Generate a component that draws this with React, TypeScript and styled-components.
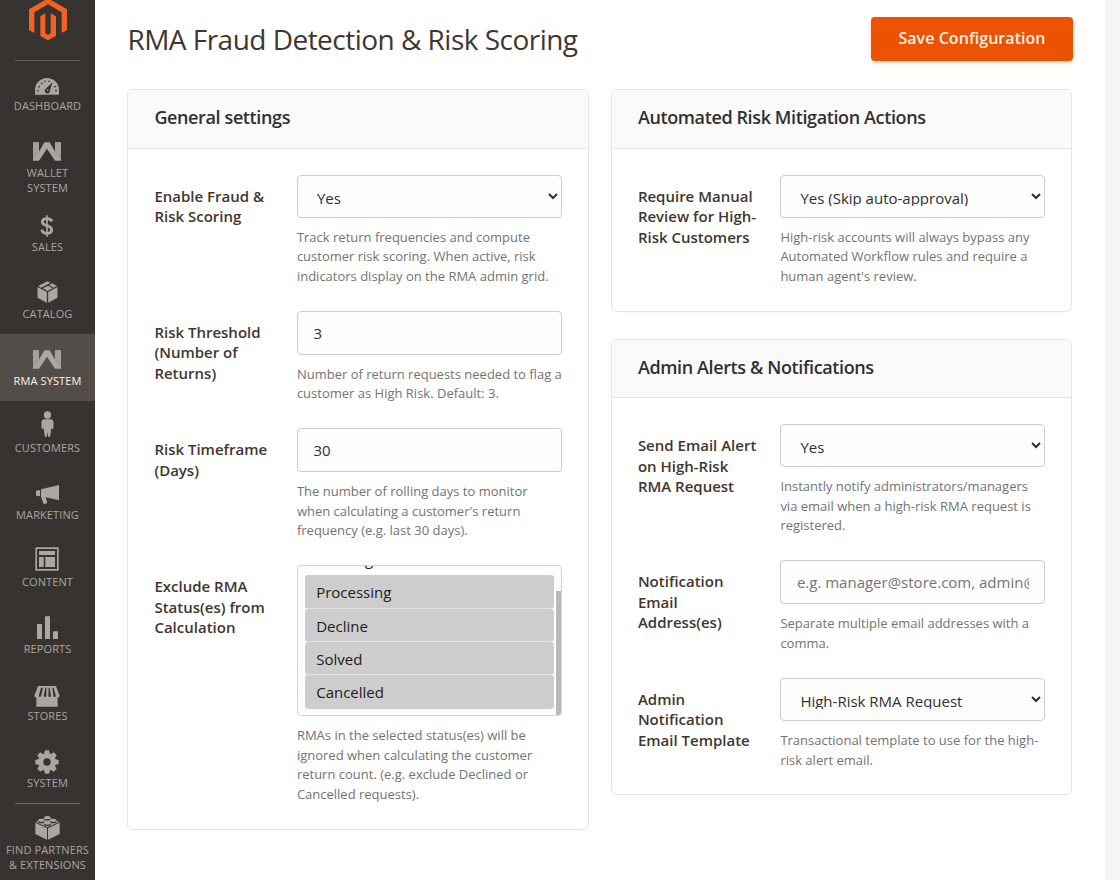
import React from "react";
import styled, { createGlobalStyle } from "styled-components";

const BG = "#373330";

const Global = createGlobalStyle`
  * { box-sizing: border-box; }
  body { margin: 0; background: #f5f5f5; font-family: "Open Sans", sans-serif; color: #41362f; overflow: hidden; }
`;

const Page = styled.div`
  display: flex;
  width: 1120px;
  height: 880px;
  overflow: hidden;
`;

const Sidebar = styled.nav`
  width: 95px;
  flex: none;
  background: ${BG};
  display: flex;
  flex-direction: column;
  align-items: center;
`;

const LogoBox = styled.div`
  height: 61px;
  width: 65px;
  margin-bottom: -2px;
  flex: none;
  display: flex;
  justify-content: center;
  border-bottom: 1px solid #625a55;
`;

const Divider = styled.div`
  width: 65px;
  height: 1px;
  margin-bottom: -1px;
  flex: none;
  background: #736963;
`;

const Menu = styled.div`
  width: 100%;
  flex: none;
`;

const MenuItem = styled.a<{ $active?: boolean }>`
  display: flex;
  flex-direction: column;
  align-items: center;
  min-height: 67px;
  padding-bottom: 5px;
  color: ${(p) => (p.$active ? "#f7f3eb" : "#aaa6a0")};
  background: ${(p) => (p.$active ? "#524d49" : "transparent")};
`;

const IconSlot = styled.span<{ $drop: number }>`
  height: 40px;
  padding-right: 1px;
  padding-bottom: ${(p) => p.$drop}px;
  flex: none;
  display: flex;
  align-items: flex-end;
  color: #aaa6a0;
  svg { display: block; }
`;

const MenuLabel = styled.span`
  font-size: 11px;
  line-height: 14.5px;
  letter-spacing: 0.1px;
  text-align: center;
  text-transform: uppercase;
  white-space: pre-line;
`;

const Main = styled.main`
  width: 1010px;
  flex: none;
  background: #fff;
  padding: 17px 32px 0 32.4px;
`;

const TopBar = styled.header`
  display: flex;
  justify-content: space-between;
  align-items: flex-start;
  height: 72.1px;
`;

const Title = styled.h1`
  margin: 3px 0 0;
  font-size: 28px;
  font-weight: 400;
  line-height: 38px;
  letter-spacing: -0.52px;
  color: #41362f;
`;

const SaveButton = styled.button`
  width: 202px;
  height: 44px;
  border: 0;
  border-radius: 4px;
  padding: 0 0 2px;
  background: #eb5202;
  color: #fff3e6;
  font: 600 16px "Open Sans", sans-serif;
  letter-spacing: 0.05px;
  box-shadow: 0 2px 4px rgba(235, 82, 2, 0.25);
`;

const Columns = styled.div`
  display: grid;
  grid-template-columns: 461.3px 461.3px;
  column-gap: 22.2px;
  align-items: start;
`;

const Column = styled.div`
  display: flex;
  flex-direction: column;
  gap: 27.2px;
`;

const Card = styled.section`
  border: 1px solid #e6e6e6;
  border-radius: 6px;
  background: #fff;
  box-shadow: 0 1px 3px rgba(0, 0, 0, 0.03);
  overflow: hidden;
`;

const CardHeader = styled.h2`
  margin: 0;
  height: 58.5px;
  padding: 0 26px 4px;
  display: flex;
  align-items: center;
  background: #fafafa;
  border-bottom: 1px solid #e6e6e6;
  font-size: 18px;
  letter-spacing: -0.38px;
  font-weight: 600;
  color: #303030;
`;

const CardBody = styled.div`
  padding: 26px 26px 24.4px;
  display: flex;
  flex-direction: column;
  gap: 24.5px;
`;

const FieldRow = styled.div`
  display: grid;
  grid-template-columns: 121px 265px;
  column-gap: 21.5px;
`;

const FieldLabel = styled.label`
  padding-top: 11px;
  font-size: 15px;
  line-height: 20.5px;
  font-weight: 600;
  color: #41362f;
`;

const Hint = styled.p`
  margin: 10.1px 0 0;
  font-size: 13px;
  line-height: 19.5px;
  color: #737373;
`;

const Select = styled.select`
  display: block;
  width: 265px;
  height: 43px;
  padding: 11px 15px;
  border: 1px solid #ccc;
  border-radius: 4px;
  background: #fdfdfd;
  font: 400 15px "Open Sans", sans-serif;
  color: #303030;
`;

const Input = styled.input`
  display: block;
  width: 265px;
  height: 44px;
  padding: 12px 15.5px;
  border: 1px solid #ccc;
  border-radius: 4px;
  background: #fdfdfd;
  font: 400 15px "Open Sans", sans-serif;
  color: #303030;
  &::placeholder { color: #757575; }
`;

const ListFrame = styled.div`
  display: flex;
  width: 265px;
  height: 151px;
  border: 1px solid #d2d2d2;
  border-radius: 4px;
  background: #fdfdfd;
  overflow: hidden;
`;

const ListOptions = styled.div`
  flex: 1;
  padding: 0 2px 6.5px 6.8px;
  display: flex;
  flex-direction: column;
  justify-content: flex-end;
`;

const ListOption = styled.div<{ $selected?: boolean }>`
  height: 33.4px;
  flex: none;
  padding-left: 11.5px;
  border-radius: 3px;
  border-bottom: 1px solid #e2e2e2;
  background: ${(p) => (p.$selected ? "#cdcdcd" : "transparent")};
  font-size: 15px;
  line-height: 34px;
  color: #1c1c1c;
  &:first-child, &:last-child { border-bottom: 0; }
`;

const ScrollTrack = styled.div`
  width: 5px;
  padding-top: 25px;
`;

const ScrollThumb = styled.div`
  height: 100%;
  background: #b9b9b9;
`;

const Logo = () => (
  <svg width="40" height="42" viewBox="84 0 120 126" fill="#f26322">
    <path d="M144-5 201 28V90L185 99V37L144 13 103 37V99L87 90V28Z" />
    <path d="M136 40V100L144 105 152 100V40L168 49V108L144 121 121 108V49Z" />
  </svg>
);

const GaugeIcon = () => (
  <svg width="24" height="17" viewBox="0 0 72 51" fill="currentColor">
    <path d="M0 50V36a36 36 0 0 1 72 0V50Z" />
    <g fill={BG}>
      <circle cx="9" cy="38" r="2.5" /><circle cx="12" cy="26" r="2.5" /><circle cx="20" cy="16" r="2.5" />
      <circle cx="30" cy="10" r="2.5" /><circle cx="42" cy="10" r="2.5" /><circle cx="60" cy="26" r="2.5" /><circle cx="63" cy="38" r="2.5" />
      <path d="M53 13 45 37a8 8 0 1 1-13-5Z" />
    </g>
    <circle cx="38" cy="36" r="2.5" />
  </svg>
);

const WIcon = () => (
  <svg width="28" height="19" viewBox="0 0 84 56">
    <path fill="#8f8c88" d="M0 0H18V40L0 56ZM84 0H66V40L84 56Z" />
    <path fill="#aaa6a0" d="M34 0H50L68 32 84 48V56H66L42 20 18 56H0V48L16 32Z" />
    <path fill="#a39f9a" d="M0 0H18V28L0 44ZM84 0H66V28L84 44Z" />
  </svg>
);

const DollarIcon = () => (
  <svg width="14" height="22" viewBox="0 0 42 66" fill="none" stroke="currentColor">
    <path strokeWidth="8.5" d="M36 19C33 12 27 11 21 11 13 11 7 14 7 21 7 36 35 27 35 44 35 52 29 55 21 55 12 55 7 52 5 44" />
    <path strokeWidth="5" d="M21 1V65" />
  </svg>
);

const BoxIcon = () => (
  <svg width="21" height="22" viewBox="0 0 62 66" fill="currentColor">
    <path d="M1 18 29 33V65L1 50ZM61 18 33 33V65L61 50ZM31 1 40 5 12 20 3 15ZM44 7 59 15 50 20 36 12ZM33 14 47 22 31 30 17 22Z" />
  </svg>
);

const PersonIcon = () => (
  <svg width="13" height="26" viewBox="0 0 38 78" fill="currentColor">
    <circle cx="19" cy="12" r="11" />
    <path d="M9 25H29Q37 26 37 34V52Q34 57 31 50L27 77H21L19 62 17 77H11L7 50Q4 57 1 52V34Q1 26 9 25Z" />
  </svg>
);

const HornIcon = () => (
  <svg width="23" height="20" viewBox="0 0 69 60" fill="currentColor">
    <path d="M0 17 12 15V34L0 32ZM15 13 69 0V46L29 37 34 54 23 58 15 35Z" />
  </svg>
);

const ContentIcon = () => (
  <svg width="24" height="24" viewBox="0 0 72 72" fill="currentColor">
    <path fillRule="evenodd" d="M1 1H71V71H1ZM6 6V66H66V6Z" />
    <path d="M12 12H60V24H12ZM12 30H26V60H12ZM31 30H60V60H31Z" />
  </svg>
);

const ChartIcon = () => (
  <svg width="21" height="23" viewBox="0 0 63 69" fill="currentColor">
    <path d="M0 24H15V69H0ZM24 1H39V69H24ZM48 46H63V69H48Z" />
  </svg>
);

const StoreIcon = () => (
  <svg width="26" height="21" viewBox="0 0 78 63" fill="currentColor">
    <path d="M12 0H66L77 29Q76 35 71 34V62H7V34Q2 35 1 29Z" />
    <path fill={BG} d="M21 5H27L21 31Q18 34 14 31ZM34 5H37V31Q33 35 29 31ZM44 5H47L51 31Q47 35 43 31ZM55 5H59L66 31Q61 35 58 31Z" />
  </svg>
);

const GearIcon = () => (
  <svg width="24" height="24" viewBox="-36 -36 72 72" fill="currentColor">
    {[0, 45, 90, 135].map((a) => (
      <path key={a} transform={`rotate(${a})`} d="M-9-24-6-35H6L9-24V24L6 35H-6L-9 24Z" />
    ))}
    <circle r="26" />
    <circle r="11" fill={BG} />
  </svg>
);

const BrickIcon = () => (
  <svg width="25" height="24" viewBox="0 0 75 72" fill="currentColor">
    <path d="M1 20 36 37V71L1 54ZM74 20 39 37V71L74 54ZM37 2 73 18 37 34 2 18Z" />
    {[[37, 6], [19, 14], [55, 14], [37, 22]].map(([x, y]) => (
      <g key={`${x}-${y}`}>
        <ellipse cx={x} cy={y + 2.5} rx="10.5" ry="5.5" fill={BG} />
        <ellipse cx={x} cy={y - 1} rx="10" ry="5" />
      </g>
    ))}
  </svg>
);

const items: { label: string; icon: React.ReactNode; drop: number; active?: boolean }[] = [
  { label: "Dashboard", icon: <GaugeIcon />, drop: 4 },
  { label: "Wallet\nSystem", icon: <WIcon />, drop: 5 },
  { label: "Sales", icon: <DollarIcon />, drop: 3 },
  { label: "Catalog", icon: <BoxIcon />, drop: 4 },
  { label: "RMA System", icon: <WIcon />, drop: 5, active: true },
  { label: "Customers", icon: <PersonIcon />, drop: 4 },
  { label: "Marketing", icon: <HornIcon />, drop: 3 },
  { label: "Content", icon: <ContentIcon />, drop: 4 },
  { label: "Reports", icon: <ChartIcon />, drop: 3 },
  { label: "Stores", icon: <StoreIcon />, drop: 2 },
  { label: "System", icon: <GearIcon />, drop: 2 },
];

const Field = ({ label, hint, children }: { label: string; hint: string; children: React.ReactNode }) => (
  <FieldRow>
    <FieldLabel>{label}</FieldLabel>
    <div>
      {children}
      <Hint>{hint}</Hint>
    </div>
  </FieldRow>
);

export default function App() {
  return (
    <Page>
      <Global />
      <Sidebar>
        <LogoBox><Logo /></LogoBox>
        <Menu>
          {items.map((it) => (
            <MenuItem key={it.label} $active={it.active}>
              <IconSlot $drop={it.drop}>{it.icon}</IconSlot>
              <MenuLabel>{it.label}</MenuLabel>
            </MenuItem>
          ))}
        </Menu>
        <Divider />
        <MenuItem>
          <IconSlot $drop={3}><BrickIcon /></IconSlot>
          <MenuLabel>{"Find Partners\n& Extensions"}</MenuLabel>
        </MenuItem>
      </Sidebar>
      <Main>
        <TopBar>
          <Title>RMA Fraud Detection &amp; Risk Scoring</Title>
          <SaveButton>Save Configuration</SaveButton>
        </TopBar>
        <Columns>
          <Card>
            <CardHeader>General settings</CardHeader>
            <CardBody>
              <Field label="Enable Fraud & Risk Scoring" hint="Track return frequencies and compute customer risk scoring. When active, risk indicators display on the RMA admin grid.">
                <Select><option>Yes</option></Select>
              </Field>
              <Field label="Risk Threshold (Number of Returns)" hint="Number of return requests needed to flag a customer as High Risk. Default: 3.">
                <Input defaultValue="3" />
              </Field>
              <Field label="Risk Timeframe (Days)" hint="The number of rolling days to monitor when calculating a customer's return frequency (e.g. last 30 days).">
                <Input defaultValue="30" />
              </Field>
              <Field label="Exclude RMA Status(es) from Calculation" hint="RMAs in the selected status(es) will be ignored when calculating the customer return count. (e.g. exclude Declined or Cancelled requests).">
                <ListFrame>
                  <ListOptions>
                    <ListOption>Pending</ListOption>
                    <ListOption $selected>Processing</ListOption>
                    <ListOption $selected>Decline</ListOption>
                    <ListOption $selected>Solved</ListOption>
                    <ListOption $selected>Cancelled</ListOption>
                  </ListOptions>
                  <ScrollTrack><ScrollThumb /></ScrollTrack>
                </ListFrame>
              </Field>
            </CardBody>
          </Card>
          <Column>
            <Card>
              <CardHeader>Automated Risk Mitigation Actions</CardHeader>
              <CardBody>
                <Field label="Require Manual Review for High-Risk Customers" hint="High-risk accounts will always bypass any Automated Workflow rules and require a human agent's review.">
                  <Select><option>Yes (Skip auto-approval)</option></Select>
                </Field>
              </CardBody>
            </Card>
            <Card>
              <CardHeader>Admin Alerts &amp; Notifications</CardHeader>
              <CardBody>
                <Field label="Send Email Alert on High-Risk RMA Request" hint="Instantly notify administrators/managers via email when a high-risk RMA request is registered.">
                  <Select><option>Yes</option></Select>
                </Field>
                <Field label="Notification Email Address(es)" hint="Separate multiple email addresses with a comma.">
                  <Input placeholder="e.g. manager@store.com, admin@store.com" />
                </Field>
                <Field label="Admin Notification Email Template" hint="Transactional template to use for the high-risk alert email.">
                  <Select><option>High-Risk RMA Request</option></Select>
                </Field>
              </CardBody>
            </Card>
          </Column>
        </Columns>
      </Main>
    </Page>
  );
}
